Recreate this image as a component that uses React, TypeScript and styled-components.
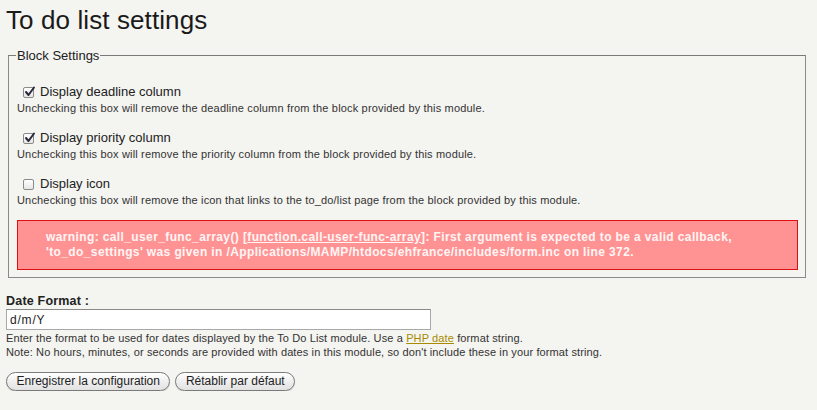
import React from "react";
import styled, { createGlobalStyle } from "styled-components";

const GlobalStyle = createGlobalStyle`
  html, body {
    margin: 0;
    padding: 0;
    background: #f4f4f0;
  }
  body {
    font-family: "Liberation Sans", Arial, sans-serif;
    color: #222;
  }
`;

const Page = styled.div`
  padding: 0 6px;
  width: 812px;
  box-sizing: border-box;
`;

const Title = styled.h1`
  margin: 0;
  padding-top: 5px;
  font-size: 26px;
  font-weight: normal;
  line-height: 30px;
  color: #1a1a1a;
  letter-spacing: 0.1px;
`;

const Fieldset = styled.fieldset`
  margin: 13px 0 0 2px;
  padding: 21px 7px 7px 8px;
  border: 1px solid #8a8a8a;
  border-top-color: #7a7a7a;
`;

const Legend = styled.legend`
  padding: 0 1px;
  margin-left: -1px;
  font-size: 13px;
  color: #222;
`;

const OptionList = styled.div`
  display: flex;
  flex-direction: column;
  gap: 15px;
`;

const CheckRow = styled.label`
  display: flex;
  align-items: center;
  gap: 6px;
  padding-left: 6px;
  font-size: 13px;
  line-height: 16px;
  color: #222;
`;

const Box = styled.span<{ $checked?: boolean }>`
  width: 11px;
  height: 11px;
  border: 1px solid #8a8a8a;
  border-radius: 2px;
  background: linear-gradient(#ffffff, #e6e6e6);
  box-sizing: border-box;
  position: relative;
`;

const Description = styled.div`
  font-size: 11px;
  line-height: 14px;
  letter-spacing: 0.17px;
  color: #333;
  margin-top: 1px;
`;

const ErrorBox = styled.div`
  margin-top: 13px;
  background: #ff9393;
  border: 1px solid #e01010;
  padding: 9px 20px 9px 28px;
  color: #fff5f5;
  font-size: 12px;
  line-height: 15px;
  font-weight: bold;
  letter-spacing: 0.38px;
`;

const ErrorLink = styled.span`
  text-decoration: underline;
  color: #fff5f5;
`;

const FormItem = styled.div`
  margin-top: 16px;
`;

const FieldLabel = styled.div`
  font-size: 12.5px;
  font-weight: bold;
  line-height: 15px;
  letter-spacing: 0.2px;
  color: #222;
`;

const TextInput = styled.input`
  display: block;
  width: 425px;
  height: 21px;
  box-sizing: border-box;
  margin-top: 0;
  border: 1px solid #a8a8a8;
  border-top-color: #8a8a8a;
  background: #fff;
  padding: 1px 3px;
  font-family: "Liberation Sans", Arial, sans-serif;
  font-size: 12px;
  letter-spacing: 0.8px;
  color: #222;
  outline: none;
`;

const Help = styled.div<{ $first?: boolean }>`
  font-size: 11px;
  line-height: 14px;
  letter-spacing: 0.12px;
  color: #333;
  margin-top: ${(p) => (p.$first ? "1px" : "0")};
`;

const Link = styled.a`
  color: #a88a00;
  text-decoration: underline;
`;

const Buttons = styled.div`
  display: flex;
  gap: 5px;
  margin-top: 13px;
`;

const Button = styled.button`
  height: 19px;
  padding: 0 9.5px;
  border: 1px solid #7a7a7a;
  border-radius: 10px;
  background: linear-gradient(#ffffff, #ececec 60%, #e2e2e2);
  font-family: "Liberation Sans", Arial, sans-serif;
  font-size: 12px;
  line-height: 17px;
  color: #222;
  box-shadow: 0 1px 1px rgba(0, 0, 0, 0.15);
`;

const Check = ({ checked }: { checked?: boolean }) => (
  <Box $checked={checked}>
    {checked && (
      <svg
        width="12"
        height="12"
        viewBox="0 0 12 12"
        style={{ position: "absolute", left: 0, top: -2 }}
      >
        <path
          d="M2 6 L4.5 9 L10 1.5"
          fill="none"
          stroke="#2a2a3a"
          strokeWidth="2"
          strokeLinecap="round"
          strokeLinejoin="round"
        />
      </svg>
    )}
  </Box>
);

const options = [
  {
    label: "Display deadline column",
    checked: true,
    text: "Unchecking this box will remove the deadline column from the block provided by this module.",
  },
  {
    label: "Display priority column",
    checked: true,
    text: "Unchecking this box will remove the priority column from the block provided by this module.",
  },
  {
    label: "Display icon",
    checked: false,
    text: "Unchecking this box will remove the icon that links to the to_do/list page from the block provided by this module.",
  },
];

const App = () => {
  return (
    <Page>
      <GlobalStyle />
      <Title>To do list settings</Title>
      <Fieldset>
        <Legend>Block Settings</Legend>
        <OptionList>
          {options.map((o) => (
            <div key={o.label}>
              <CheckRow>
                <Check checked={o.checked} />
                {o.label}
              </CheckRow>
              <Description>{o.text}</Description>
            </div>
          ))}
        </OptionList>
        <ErrorBox>
          warning: call_user_func_array() [
          <ErrorLink>function.call-user-func-array</ErrorLink>]: First argument
          is expected to be a valid callback,
          <br />
          'to_do_settings' was given in
          /Applications/MAMP/htdocs/ehfrance/includes/form.inc on line 372.
        </ErrorBox>
      </Fieldset>
      <FormItem>
        <FieldLabel>Date Format :</FieldLabel>
        <TextInput defaultValue="d/m/Y" />
        <Help $first>
          Enter the format to be used for dates displayed by the To Do List
          module. Use a <Link href="#">PHP date</Link> format string.
        </Help>
        <Help>
          Note: No hours, minutes, or seconds are provided with dates in this
          module, so don't include these in your format string.
        </Help>
      </FormItem>
      <Buttons>
        <Button>Enregistrer la configuration</Button>
        <Button>Rétablir par défaut</Button>
      </Buttons>
    </Page>
  );
};

export default App;
